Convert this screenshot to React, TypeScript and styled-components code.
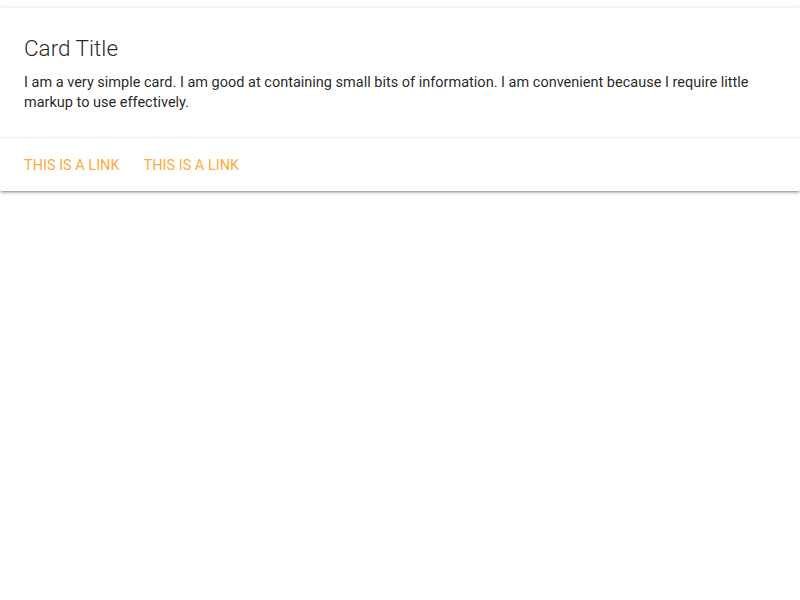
import { createGlobalStyle } from "styled-components";
import styled from "styled-components";

const GlobalStyle = createGlobalStyle`
  html {
    font-size: 14.5px;
  }

  body {
    margin: 0;
    background: #fff;
    color: rgba(0, 0, 0, 0.87);
    font-family: Roboto, "Noto Sans", sans-serif;
    line-height: 20px;
  }
`;

const Card = styled.div`
  margin: 8px 0 16px 0;
  background: #fff;
  border-radius: 2px;
  box-shadow: 0 2px 2px 0 rgba(0, 0, 0, 0.14), 0 3px 1px -2px rgba(0, 0, 0, 0.12),
    0 1px 5px 0 rgba(0, 0, 0, 0.2);
`;

const CardContent = styled.div`
  padding: 24px;
`;

const CardTitle = styled.span`
  display: block;
  margin-bottom: 9px;
  font-size: 22.5px;
  font-weight: 300;
  line-height: 32px;
`;

const CardText = styled.p`
  margin: 0;
`;

const CardAction = styled.div`
  display: flex;
  gap: 24px;
  padding: 18px 24px 15px;
  border-top: 1px solid rgba(160, 160, 160, 0.2);
`;

const ActionLink = styled.a`
  color: #ffab40;
  text-decoration: none;
  text-transform: uppercase;
  cursor: pointer;
`;

export default function App() {
  return (
    <>
      <GlobalStyle />
      <Card>
        <CardContent>
          <CardTitle>Card Title</CardTitle>
          <CardText>
            I am a very simple card. I am good at containing small bits of information. I am
            convenient because I require little markup to use effectively.
          </CardText>
        </CardContent>
        <CardAction>
          <ActionLink href="#">This is a link</ActionLink>
          <ActionLink href="#">This is a link</ActionLink>
        </CardAction>
      </Card>
    </>
  );
}
